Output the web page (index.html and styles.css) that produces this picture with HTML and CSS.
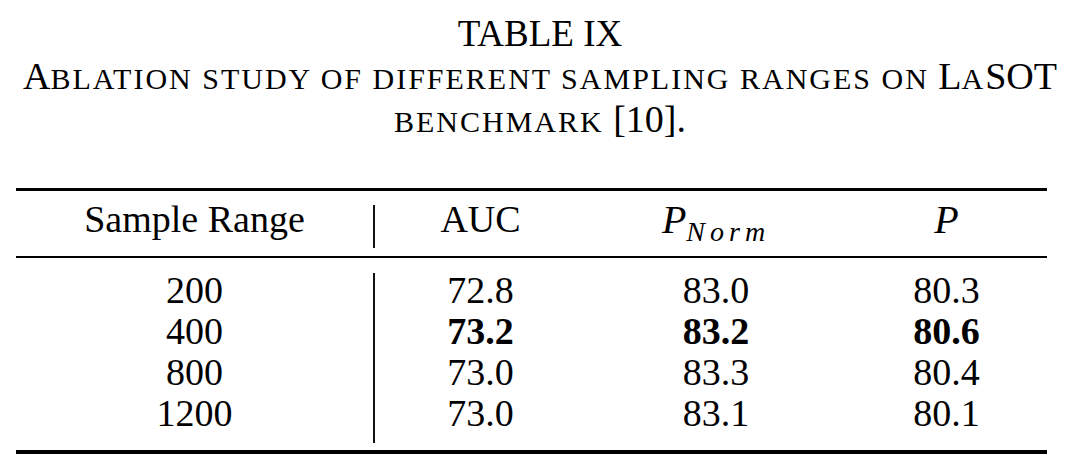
FILE: index.html
```html
<!DOCTYPE html>
<html lang="en">
<head>
    <meta charset="UTF-8">
    <meta name="viewport" content="width=device-width, initial-scale=1.0">
    <title>Table IX - Sampling Range Ablation on LaSOT</title>
    <link rel="stylesheet" href="styles.css">
</head>
<body>
    <div class="caption">
        <div class="caption-label">TABLE IX</div>
        <div class="caption-title">A<span class="sc">blation study of different sampling ranges on</span> L<span class="sc">a</span>SOT<br><span class="sc">benchmark</span> [10].</div>
    </div>

    <div class="results">
        <div class="head">
            <div class="divider"></div>
            <div class="cell">Sample Range</div>
            <div class="cell">AUC</div>
            <div class="cell"><i class="math">P</i><sub class="math-sub">Norm</sub></div>
            <div class="cell"><i class="math">P</i></div>
        </div>
        <div class="rows">
            <div class="divider"></div>

            <div class="cell">200</div>
            <div class="cell">72.8</div>
            <div class="cell">83.0</div>
            <div class="cell">80.3</div>

            <div class="cell">400</div>
            <div class="cell best">73.2</div>
            <div class="cell best">83.2</div>
            <div class="cell best">80.6</div>

            <div class="cell">800</div>
            <div class="cell">73.0</div>
            <div class="cell">83.3</div>
            <div class="cell">80.4</div>

            <div class="cell">1200</div>
            <div class="cell">73.0</div>
            <div class="cell">83.1</div>
            <div class="cell">80.1</div>
        </div>
    </div>
</body>
</html>
```

FILE: styles.css
```css
body {
    margin: 0;
    padding: 12px 16px 0;
    background: #fff;
    color: #000;
    font-family: "Liberation Serif", "Times New Roman", Times, serif;
}
.caption {
    text-align: center;
    font-size: 38px;
    line-height: 43px;
}
.caption-label {
    font-size: 37px;
}
.sc {
    text-transform: uppercase;
    font-size: 30px;
    line-height: 30px;
    letter-spacing: 2px;
}
.results {
    width: 1031px;
    margin-top: 47px;
    border-top: 3px solid #000;
    border-bottom: 4px solid #000;
    font-size: 38px;
    line-height: 41px;
}
.head, .rows {
    display: grid;
    grid-template-columns: 357px 2px 211px 260px 201px;
}
.head {
    padding: 8px 0 15px;
    border-bottom: 2px solid #000;
}
.rows {
    padding: 12px 0 16px;
}
.cell {
    text-align: center;
    white-space: nowrap;
}
.divider {
    grid-column: 2;
    grid-row: 1 / 5;
    background: #111;
}
.head .divider {
    grid-row: 1;
    margin: 6px 0 -7px;
}
.rows .divider {
    margin: 3px 0 -9px;
}
.best {
    font-weight: bold;
}
.math {
    font-style: italic;
    font-size: 40px;
}
.math-sub {
    font-style: italic;
    font-size: 28px;
    letter-spacing: 5px;
    line-height: 0;
    vertical-align: -8px;
}
```
